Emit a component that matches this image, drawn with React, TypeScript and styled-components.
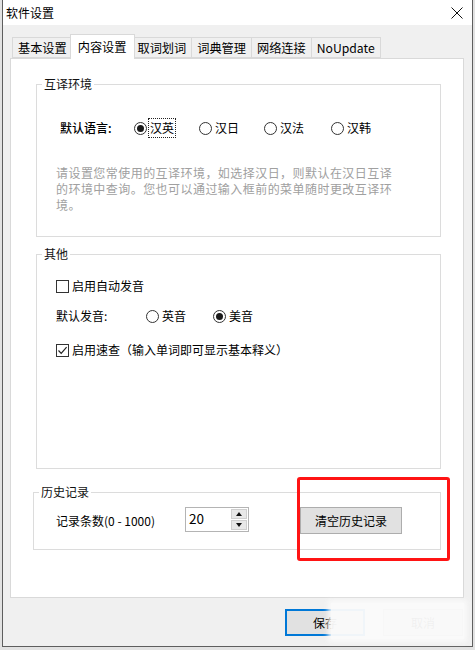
import React from "react";
import styled, { createGlobalStyle } from "styled-components";

const GlobalStyle = createGlobalStyle`
  html, body { margin: 0; padding: 0; background: #e2e2e2; }
  body {
    width: 475px; height: 650px; overflow: hidden;
    font-family: "Noto Sans CJK SC", "Noto Sans", "Liberation Sans", sans-serif;
    font-size: 12px; color: #000;
  }
  * { box-sizing: border-box; }
`;

const Window = styled.div`
  position: relative;
  margin-left: 2px;
  width: 471px;
  height: 647px;
  border: 1px solid #5e5e5e;
  border-top: none;
  background: #f0f0f0;
  display: flex;
  flex-direction: column;
`;

const TitleBar = styled.div`
  height: 25px;
  background: #fff;
  display: flex;
  align-items: center;
  justify-content: space-between;
  padding: 0 9px 0 3px;
  font-size: 12px;
  line-height: 16px;
`;

const Body = styled.div`
  padding: 9px 8px 0 7px;
  display: flex;
  flex-direction: column;
`;

const TabRow = styled.div`
  display: flex;
  align-items: flex-end;
  height: 24px;
  padding-left: 2px;
  position: relative;
  z-index: 1;
`;

const Tab = styled.div<{ $active?: boolean }>`
  height: ${(p) => (p.$active ? "25px" : "21px")};
  margin: ${(p) => (p.$active ? "0 -3px -1px -2px" : "0 -1px 0 0")};
  padding: ${(p) => (p.$active ? "0 7px" : "0 5px")};
  background: ${(p) => (p.$active ? "#fff" : "#f0f0f0")};
  border: 1px solid #d9d9d9;
  border-bottom: ${(p) => (p.$active ? "none" : "1px solid #d9d9d9")};
  display: flex;
  align-items: center;
  line-height: 16px;
  font-size: 12.2px;
  white-space: nowrap;
  position: relative;
  z-index: ${(p) => (p.$active ? 2 : 1)};
`;

const Panel = styled.div`
  height: 540px;
  border: 1px solid #d9d9d9;
  background: #fff;
  padding-top: 17px;
  display: flex;
  flex-direction: column;
`;

const Group = styled.fieldset<{ $left: number; $width: number; $top: number }>`
  margin: ${(p) => p.$top}px 0 0 ${(p) => p.$left}px;
  width: ${(p) => p.$width}px;
  padding: 0;
  border: 1px solid #dcdcdc;
  min-width: 0;
`;

const Legend = styled.legend`
  margin-left: 5px;
  padding: 0 2px;
  line-height: 16px;
  font-size: 12px;
  color: #111;
`;

const GroupBody = styled.div<{ $h: number; $pt: number; $pl: number }>`
  height: ${(p) => p.$h}px;
  padding: ${(p) => p.$pt}px 0 0 ${(p) => p.$pl}px;
  display: flex;
  flex-direction: column;
`;

const Row = styled.div<{ $mt?: number; $ml?: number }>`
  display: flex;
  align-items: center;
  height: 18px;
  line-height: 16px;
  margin-top: ${(p) => p.$mt ?? 0}px;
  margin-left: ${(p) => p.$ml ?? 0}px;
`;

const RowLabel = styled.div<{ $w: number; $strong?: boolean }>`
  width: ${(p) => p.$w}px;
  flex: none;
  font-weight: ${(p) => (p.$strong ? 500 : 400)};
`;

const Option = styled.label<{ $w?: number }>`
  display: flex;
  align-items: center;
  gap: 3px;
  width: ${(p) => (p.$w ? `${p.$w}px` : "auto")};
  flex: none;
`;

const RadioCircle = styled.span<{ $on?: boolean }>`
  width: 13px;
  height: 13px;
  border-radius: 50%;
  border: 1px solid #333;
  background: #fff;
  display: flex;
  align-items: center;
  justify-content: center;
  &::after {
    content: "";
    width: 7px;
    height: 7px;
    border-radius: 50%;
    background: ${(p) => (p.$on ? "#1a1a1a" : "transparent")};
  }
`;

const CheckBox = styled.span`
  width: 13px;
  height: 13px;
  border: 1px solid #333;
  background: #fff;
  display: flex;
  align-items: center;
  justify-content: center;
  flex: none;
`;

const Focused = styled.span`
  outline: 1px dotted #222;
  outline-offset: 1px;
`;

const Hint = styled.p`
  margin: 28px 0 0 -2px;
  color: #a0a0a0;
  line-height: 16px;
  letter-spacing: 0.45px;
  white-space: nowrap;
`;

const HistoryRow = styled.div`
  display: flex;
  align-items: center;
  height: 27px;
`;

const Spin = styled.div`
  width: 64px;
  height: 25px;
  border: 1px solid #b4b4b4;
  background: #fff;
  display: flex;
  margin-top: -3px;
`;

const SpinValue = styled.div`
  flex: 1;
  padding: 2px 0 0 3px;
  font-size: 13.5px;
  line-height: 16px;
`;

const SpinButtons = styled.div`
  width: 17px;
  display: flex;
  flex-direction: column;
  gap: 1px;
  padding: 1px 1px 1px 0;
`;

const SpinButton = styled.div`
  flex: 1;
  background: #e8e8e8;
  border: 1px solid #cfcfcf;
  display: flex;
  align-items: center;
  justify-content: center;
`;

const Button = styled.button<{ $w: number; $focus?: boolean; $ml?: number }>`
  width: ${(p) => p.$w}px;
  height: 27px;
  margin-left: ${(p) => p.$ml ?? 0}px;
  background: #e1e1e1;
  border: ${(p) => (p.$focus ? "2px solid #0078d7" : "1px solid #adadad")};
  font-family: inherit;
  font-size: 12px;
  line-height: 16px;
  color: #000;
  padding: 0;
  flex: none;
`;

const Footer = styled.div`
  flex: 1;
  display: flex;
  justify-content: flex-end;
  gap: 18px;
  padding: 11px 9px 0 0;
`;

const RedMark = styled.div`
  position: absolute;
  left: 294px;
  top: 477px;
  width: 153px;
  height: 84px;
  border: 3px solid #ff1414;
  border-radius: 3px;
  pointer-events: none;
`;

const Veil = styled.div`
  position: absolute;
  left: 328px;
  top: 603px;
  width: 133px;
  height: 36px;
  background: rgba(250, 250, 250, 0.96);
  box-shadow: 0 0 5px 3px rgba(250, 250, 250, 0.95);
  pointer-events: none;
`;

const Radio = ({ on, w, children }: { on?: boolean; w?: number; children: React.ReactNode }) => (
  <Option $w={w}>
    <RadioCircle $on={on} />
    {children}
  </Option>
);

const Check = ({ on, children }: { on?: boolean; children: React.ReactNode }) => (
  <Option>
    <CheckBox>
      {on && (
        <svg width="11" height="11" viewBox="0 0 11 11">
          <path d="M1.5 5.5 L4.2 8.3 L9.6 2.2" fill="none" stroke="#222" strokeWidth="1.2" />
        </svg>
      )}
    </CheckBox>
    {children}
  </Option>
);

export default function App() {
  return (
    <>
      <GlobalStyle />
      <Window>
        <TitleBar>
          <span>软件设置</span>
          <svg width="12" height="12" viewBox="0 0 12 12">
            <path d="M0.5 0.5 L11.5 11.5 M11.5 0.5 L0.5 11.5" stroke="#111" strokeWidth="1" />
          </svg>
        </TitleBar>
        <Body>
          <TabRow>
            <Tab>基本设置</Tab>
            <Tab $active>内容设置</Tab>
            <Tab>取词划词</Tab>
            <Tab>词典管理</Tab>
            <Tab>网络连接</Tab>
            <Tab>NoUpdate</Tab>
          </TabRow>
          <Panel>
            <Group $left={25} $width={405} $top={0}>
              <Legend>互译环境</Legend>
              <GroupBody $h={144} $pt={27} $pl={21}>
                <Row $ml={2}>
                  <RowLabel $w={74} $strong>默认语言:</RowLabel>
                  <Radio on w={65}>
                    <Focused>汉英</Focused>
                  </Radio>
                  <Radio w={65}>汉日</Radio>
                  <Radio w={67}>汉法</Radio>
                  <Radio>汉韩</Radio>
                </Row>
                <Hint>
                  请设置您常使用的互译环境，如选择汉日，则默认在汉日互译
                  <br />
                  的环境中查询。您也可以通过输入框前的菜单随时更改互译环
                  <br />
                  境。
                </Hint>
              </GroupBody>
            </Group>
            <Group $left={25} $width={405} $top={9}>
              <Legend>其他</Legend>
              <GroupBody $h={206} $pt={15} $pl={19}>
                <Row>
                  <Check>启用自动发音</Check>
                </Row>
                <Row $mt={12}>
                  <RowLabel $w={90}>默认发音:</RowLabel>
                  <Radio w={67}>英音</Radio>
                  <Radio on>美音</Radio>
                </Row>
                <Row $mt={16}>
                  <Check on>启用速查（输入单词即可显示基本释义）</Check>
                </Row>
              </GroupBody>
            </Group>
            <Group $left={22} $width={408} $top={15}>
              <Legend>历史记录</Legend>
              <GroupBody $h={49} $pt={7} $pl={22}>
                <HistoryRow>
                  <RowLabel $w={129}>记录条数(0 - 1000)</RowLabel>
                  <Spin>
                    <SpinValue>20</SpinValue>
                    <SpinButtons>
                      <SpinButton>
                        <svg width="6" height="4" viewBox="0 0 6 4">
                          <path d="M0 4 L3 0 L6 4 Z" fill="#111" />
                        </svg>
                      </SpinButton>
                      <SpinButton>
                        <svg width="6" height="4" viewBox="0 0 6 4">
                          <path d="M0 0 L3 4 L6 0 Z" fill="#111" />
                        </svg>
                      </SpinButton>
                    </SpinButtons>
                  </Spin>
                  <Button $w={102} $ml={51}>清空历史记录</Button>
                </HistoryRow>
              </GroupBody>
            </Group>
          </Panel>
        </Body>
        <Footer>
          <Button $w={80} $focus>保存</Button>
          <Button $w={80}>取消</Button>
        </Footer>
        <RedMark />
        <Veil />
      </Window>
    </>
  );
}
